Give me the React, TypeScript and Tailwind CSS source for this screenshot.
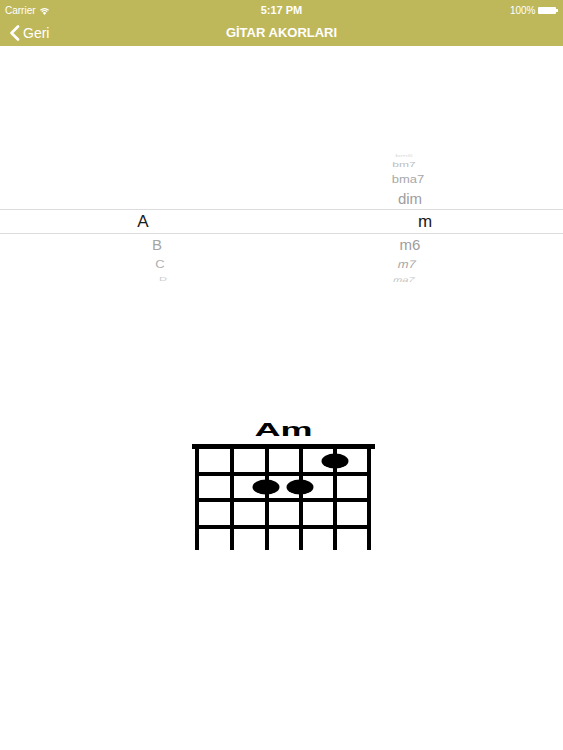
import React from "react";

const font = { fontFamily: '"Liberation Sans", Arial, sans-serif' };

const StatusBar: React.FC = () => (
	<div className="flex h-[20px] items-center justify-between px-[5px] text-[10px] text-white">
		<div className="flex w-[80px] items-center gap-[3px]">
			<span>Carrier</span>
			<svg width="11" height="9" viewBox="0 0 11 9" fill="white">
				<path d="M5.5 9 L3.7 6.9 A2.6 2.6 0 0 1 7.3 6.9 Z" />
				<path d="M2.4 5.4 A4.4 4.4 0 0 1 8.6 5.4 L7.8 6.3 A3.2 3.2 0 0 0 3.2 6.3 Z" />
				<path d="M1 3.8 A6.4 6.4 0 0 1 10 3.8 L9.2 4.7 A5.2 5.2 0 0 0 1.8 4.7 Z" />
			</svg>
		</div>
		<span className="text-[11px] font-bold">5:17 PM</span>
		<div className="flex w-[80px] items-center justify-end gap-[3px]">
			<span>100%</span>
			<div className="flex items-center">
				<div className="h-[7px] w-[18px] rounded-[1px] bg-white" />
				<div className="h-[3px] w-[1.5px] bg-white" />
			</div>
		</div>
	</div>
);

const NavBar: React.FC = () => (
	<div className="relative flex h-[26px] items-center">
		<div className="flex items-center pl-[9px] text-white">
			<svg width="11" height="16" viewBox="0 0 11 16" fill="none">
				<path d="M9 1.5 L2.5 8 L9 14.5" stroke="white" strokeWidth="2.6" strokeLinecap="round" strokeLinejoin="round" />
			</svg>
			<span className="ml-[3px] text-[14px]">Geri</span>
		</div>
		<div className="absolute inset-0 flex items-center justify-center text-[13px] font-bold text-white">
			GİTAR AKORLARI
		</div>
	</div>
);

const Picker: React.FC = () => (
	<div className="mt-[106px] flex flex-col">
		<div className="flex h-[8px] items-center overflow-hidden">
			<div className="ml-[117px] w-[80px]" />
			<div className="ml-[171px] w-[80px] text-center text-[9px] leading-none text-[#dcdcdc] -translate-x-[4px] scale-y-[0.35]">bm6</div>
		</div>
		<div className="flex h-[10px] items-center">
			<div className="ml-[117px] w-[80px]" />
			<div className="ml-[171px] w-[80px] text-center text-[12px] leading-none text-[#bdbdbd] -translate-x-[4px] scale-y-[0.6]">bm7</div>
		</div>
		<div className="flex h-[18px] items-center">
			<div className="ml-[117px] w-[80px]" />
			<div className="ml-[171px] w-[80px] text-center text-[13px] leading-none text-[#a8a8a8] scale-y-[0.85]">bma7</div>
		</div>
		<div className="flex h-[21px] items-center">
			<div className="ml-[117px] w-[80px]" />
			<div className="ml-[171px] w-[80px] translate-x-[2px] text-center text-[15px] leading-none text-[#9d9d9d]">dim</div>
		</div>
		<div className="flex h-[25px] items-center border-y border-[#dcdcdc]">
			<div className="ml-[117px] w-[80px] -translate-x-[14px] text-center text-[17px] leading-none text-[#1a1a1a]">A</div>
			<div className="ml-[171px] w-[80px] translate-x-[17px] text-center text-[17px] leading-none text-[#1a1a1a]">m</div>
		</div>
		<div className="flex h-[21px] items-center">
			<div className="ml-[117px] w-[80px] text-center text-[15px] leading-none text-[#a5a5a5]">B</div>
			<div className="ml-[171px] w-[80px] translate-x-[2px] text-center text-[15px] leading-none text-[#9d9d9d]">m6</div>
		</div>
		<div className="flex h-[18px] items-center">
			<div className="ml-[117px] w-[80px] translate-x-[3px] text-center text-[13px] leading-none text-[#b0b0b0] scale-y-[0.85]">C</div>
			<div className="ml-[171px] w-[80px] -translate-x-[1px] -skew-x-12 text-center text-[13px] leading-none text-[#a8a8a8] scale-y-[0.85]">m7</div>
		</div>
		<div className="flex h-[12px] items-center">
			<div className="ml-[117px] w-[80px] translate-x-[6px] text-center text-[11px] leading-none text-[#cdcdcd] scale-y-[0.55]">D</div>
			<div className="ml-[171px] w-[80px] -translate-x-[4px] -skew-x-12 text-center text-[11px] leading-none text-[#c4c4c4] scale-y-[0.6]">ma7</div>
		</div>
	</div>
);

const strings = [198, 233, 268, 302, 336, 370];
const frets = [472, 498, 525];

const ChordDiagram: React.FC = () => (
	<div className="mt-[134px] flex flex-col items-center">
		<div className="ml-[4px] scale-x-[2] text-[18px] font-bold leading-[22px] text-black">Am</div>
		<svg width="190" height="114" viewBox="190 438 190 114" className="ml-[4px] mt-[-1px]">
			<rect x="193" y="442" width="183" height="5" fill="black" />
			{strings.map((x) => (
				<rect key={x} x={x - 2} y="444" width="4" height="104" fill="black" />
			))}
			{frets.map((y) => (
				<rect key={y} x="196" y={y - 2} width="176" height="4" fill="black" />
			))}
			<ellipse cx="336" cy="459" rx="13.5" ry="7.5" fill="black" />
			<ellipse cx="267" cy="485" rx="13.5" ry="7.5" fill="black" />
			<ellipse cx="301" cy="485" rx="13.5" ry="7.5" fill="black" />
		</svg>
	</div>
);

export default function App() {
	return (
		<div className="h-[750px] w-[563px] overflow-hidden bg-white" style={font}>
			<div className="h-[46px] bg-[#bfb85a]">
				<StatusBar />
				<NavBar />
			</div>
			<Picker />
			<ChordDiagram />
		</div>
	);
}
